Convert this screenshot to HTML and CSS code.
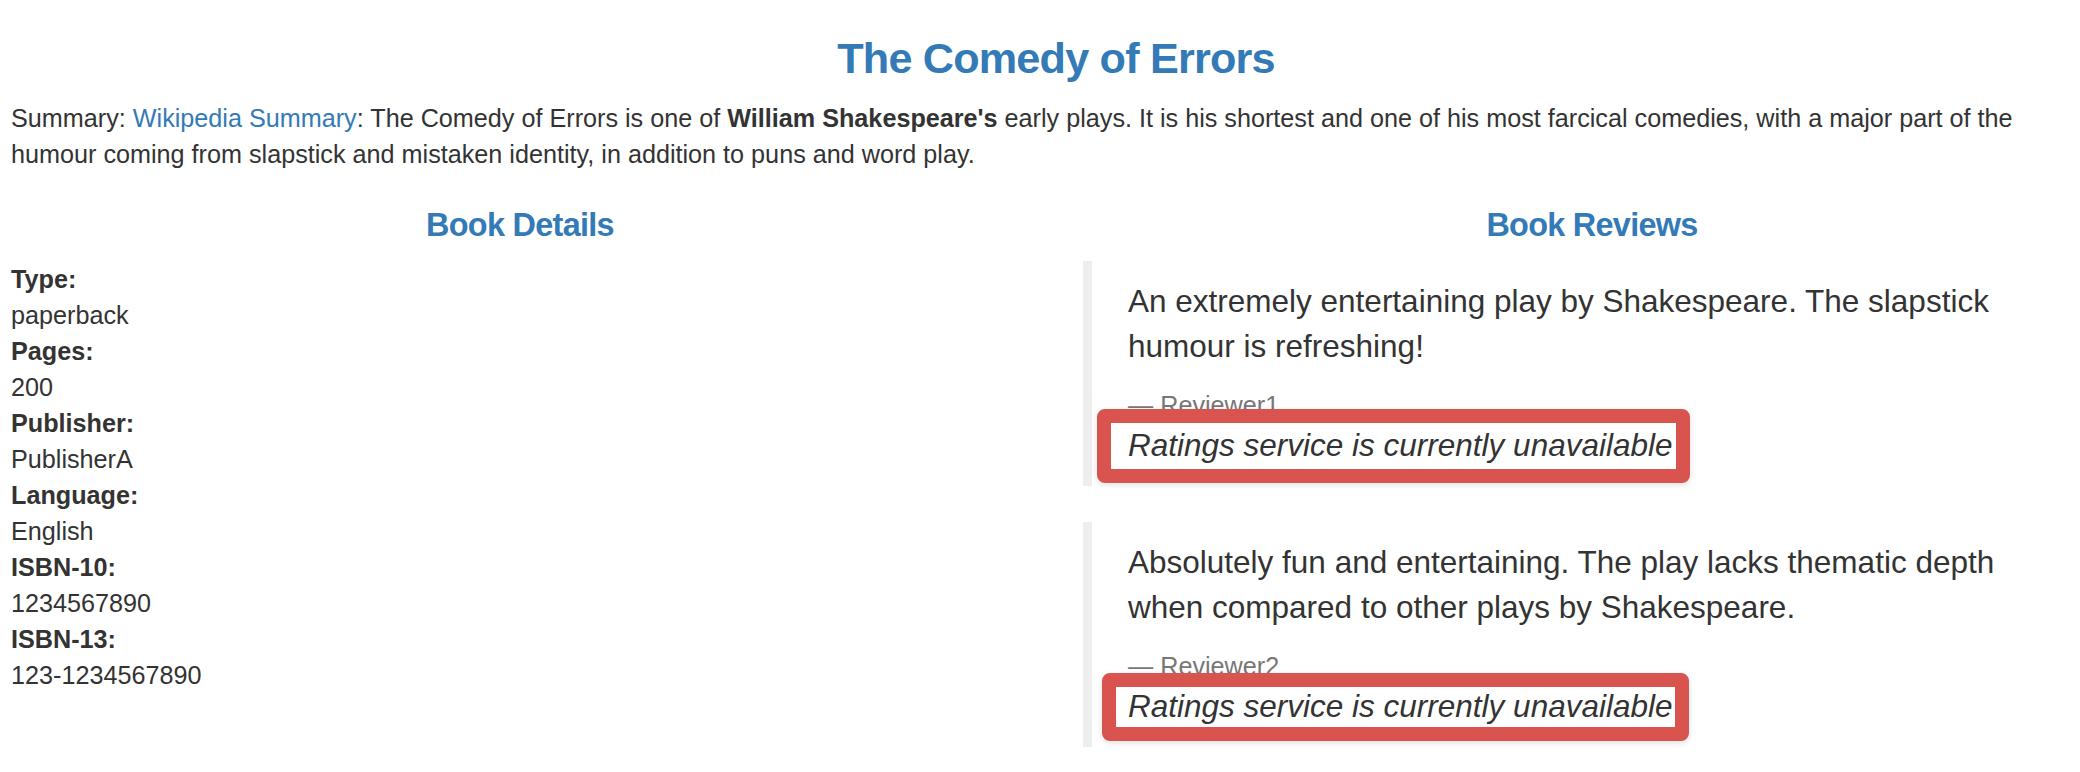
FILE: index.html
```html
<!DOCTYPE html>
<html lang="en">
<head>
<meta charset="utf-8">
<title>Simple Bookstore App</title>
<link rel="stylesheet" href="styles.css">
</head>
<body>
<div class="page">
  <header class="book-header">
    <h1 class="book-title">The Comedy of Errors</h1>
    <p class="summary">Summary: <a class="summary-link" href="#">Wikipedia Summary</a>: The Comedy of Errors is one of <b>William Shakespeare's</b> early plays. It is his shortest and one of his most farcical comedies, with a major part of the humour coming from slapstick and mistaken identity, in addition to puns and word play.</p>
  </header>
  <div class="columns">
    <section class="column">
      <h2 class="column-title">Book Details</h2>
      <dl class="details">
        <dt>Type:</dt><dd>paperback</dd>
        <dt>Pages:</dt><dd>200</dd>
        <dt>Publisher:</dt><dd>PublisherA</dd>
        <dt>Language:</dt><dd>English</dd>
        <dt>ISBN-10:</dt><dd>1234567890</dd>
        <dt>ISBN-13:</dt><dd>123-1234567890</dd>
      </dl>
    </section>
    <section class="column">
      <h2 class="column-title">Book Reviews</h2>
      <blockquote class="review">
        <p class="review-text">An extremely entertaining play by Shakespeare. The slapstick humour is refreshing!</p>
        <small class="reviewer">Reviewer1</small>
        <p class="rating"><i class="rating-note rating-note-first">Ratings service is currently unavailable</i></p>
      </blockquote>
      <blockquote class="review">
        <p class="review-text">Absolutely fun and entertaining. The play lacks thematic depth when compared to other plays by Shakespeare.</p>
        <small class="reviewer">Reviewer2</small>
        <p class="rating"><i class="rating-note rating-note-second">Ratings service is currently unavailable</i></p>
      </blockquote>
    </section>
  </div>
</div>
</body>
</html>
```
FILE: styles.css
```css
html, body {
  margin: 0;
  padding: 0;
  overflow: hidden;
  background: #fff;
}

body {
  font-family: "Helvetica Neue", Helvetica, "Liberation Sans", Arial, sans-serif;
  font-size: 25.2px;
  line-height: 36px;
  color: #333;
}

.page {
  width: 2090px;
  padding-left: 11px;
}

.book-title {
  margin: 35px 0 17px;
  font-size: 43.2px;
  line-height: 47.5px;
  font-weight: bold;
  letter-spacing: -0.8px;
  text-align: center;
  color: #337ab7;
}

.summary {
  margin: 0 0 18px;
}

.summary-link {
  color: #337ab7;
  text-decoration: none;
}

.columns {
  display: grid;
  grid-template-columns: 1fr 1fr;
  column-gap: 54px;
}

.column-title {
  margin: 18px 0 18px;
  font-size: 32.4px;
  line-height: 35.6px;
  font-weight: bold;
  letter-spacing: -0.7px;
  text-align: center;
  color: #337ab7;
}

.details {
  margin: 0 0 36px;
}

.details dt {
  font-weight: bold;
}

.details dd {
  margin: 0;
}

.review {
  margin: 0 0 36px;
  padding: 18px 36px;
  border-left: 9px solid #eee;
  font-size: 31.5px;
  line-height: 45px;
}

.review-text {
  margin: 0 0 18px;
}

.reviewer {
  display: block;
  font-size: 25.2px;
  line-height: 36px;
  color: #777;
}

.reviewer::before {
  content: "\2014\00A0";
}

.rating {
  margin: 0;
}

.rating-note {
  position: relative;
  display: inline-block;
}

.rating-note::after {
  content: "";
  position: absolute;
  border: 14px solid #d9534f;
  border-radius: 8px;
  box-shadow: 0 2px 6px rgba(0, 0, 0, 0.12);
}

.rating-note-first::after {
  top: -14px;
  bottom: -15px;
  left: -31px;
  right: -17px;
}

.rating-note-second::after {
  top: -11px;
  bottom: -12px;
  left: -26px;
  right: -16px;
}
```
